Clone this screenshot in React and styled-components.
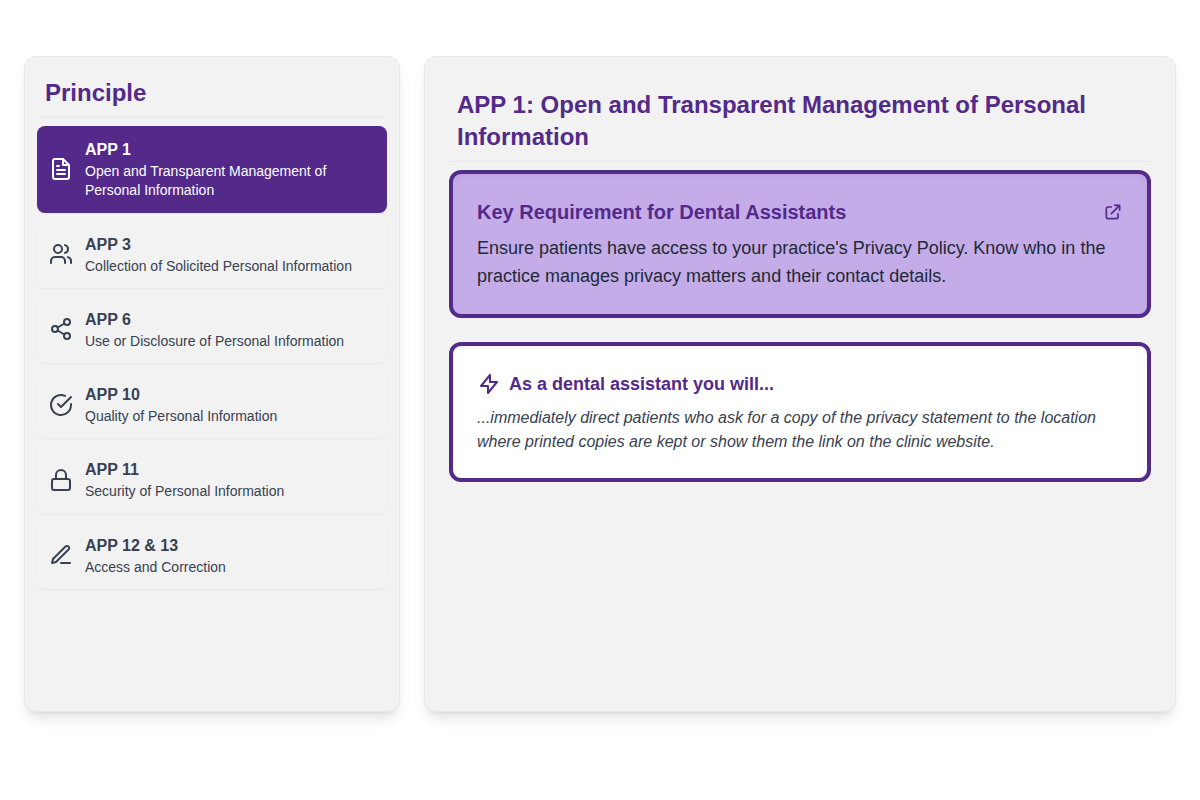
import React, { useState } from "react";
import styled, { createGlobalStyle } from "styled-components";

const purple = "#53298a";
const line = "#e5e7eb";

const GlobalStyle = createGlobalStyle`
  *, *::before, *::after { box-sizing: border-box; }
  body {
    margin: 0;
    background: #ffffff;
    color: #1f2937;
    font-family: "Liberation Sans", Arial, sans-serif;
    font-size: 16px;
    line-height: 24px;
  }
  h2, h3, h4, p, ul { margin: 0; padding: 0; }
`;

const Page = styled.main`
  display: grid;
  grid-template-columns: minmax(0, 1fr) minmax(0, 2fr);
  gap: 24px;
  min-height: 100vh;
  padding: 56px 24px 88px;
  @media (max-width: 700px) {
    grid-template-columns: minmax(0, 1fr);
  }
`;

const Panel = styled.section`
  padding: ${(p) => (p.$wide ? "24px" : "12px")};
  background: #f2f2f2;
  border: 1px solid ${line};
  border-radius: 12px;
  box-shadow: 0 10px 15px -3px rgba(0, 0, 0, 0.1), 0 4px 6px -4px rgba(0, 0, 0, 0.1);
`;

const PanelTitle = styled.h2`
  padding: 8px;
  margin-bottom: 8px;
  border-bottom: 1px solid ${line};
  color: ${purple};
  font-size: 24px;
  line-height: 32px;
  font-weight: 700;
`;

const PrincipleList = styled.ul`
  display: flex;
  flex-direction: column;
  gap: 8px;
  list-style: none;
`;

const PrincipleButton = styled.button`
  display: flex;
  align-items: center;
  gap: 12px;
  width: 100%;
  padding: 12px;
  border: 0;
  border-radius: 8px;
  background: ${(p) => (p.$active ? purple : "#f2f2f2")};
  color: ${(p) => (p.$active ? "#ffffff" : "#374151")};
  box-shadow: 0 1px 2px rgba(0, 0, 0, 0.05);
  font: inherit;
  text-align: left;
  cursor: pointer;
`;

const PrincipleText = styled.span`
  display: flex;
  flex-direction: column;
  min-width: 0;
`;

const Code = styled.span`
  font-weight: 700;
`;

const Summary = styled.span`
  font-size: 14px;
  line-height: 1.375;
`;

const Icon = styled.svg`
  flex: none;
  width: ${(p) => p.$size || 24}px;
  height: ${(p) => p.$size || 24}px;
  fill: none;
  stroke: currentColor;
  stroke-width: 2;
  stroke-linecap: round;
  stroke-linejoin: round;
`;

const Callout = styled.article`
  padding: 24px;
  border: 4px solid ${purple};
  border-radius: 12px;
  background: ${(p) => (p.$filled ? "#c4ace8" : "#ffffff")};
  box-shadow: inset 0 2px 4px rgba(0, 0, 0, 0.05);
  & + & { margin-top: 24px; }
`;

const CalloutHeader = styled.header`
  display: flex;
  align-items: center;
  justify-content: ${(p) => (p.$spread ? "space-between" : "flex-start")};
  gap: 8px;
  margin-bottom: 8px;
  color: ${purple};
`;

const CalloutTitle = styled.h3`
  font-size: ${(p) => (p.$small ? 18 : 20)}px;
  line-height: 28px;
  font-weight: 700;
`;

const PolicyLink = styled.a`
  display: flex;
  color: inherit;
`;

const Requirement = styled.p`
  font-size: 18px;
  line-height: 28px;
`;

const Action = styled.p`
  color: #374151;
  font-style: italic;
`;

const principles = [
  {
    code: "APP 1",
    name: "Open and Transparent Management of Personal Information",
    icon: (
      <>
        <path d="M14 2H6a2 2 0 0 0-2 2v16a2 2 0 0 0 2 2h12a2 2 0 0 0 2-2V8Z" />
        <path d="M14 2v6h6M10 9H8M16 13H8M16 17H8" />
      </>
    ),
  },
  {
    code: "APP 3",
    name: "Collection of Solicited Personal Information",
    icon: (
      <>
        <path d="M16 21v-2a4 4 0 0 0-4-4H6a4 4 0 0 0-4 4v2" />
        <circle cx="9" cy="7" r="4" />
        <path d="M22 21v-2a4 4 0 0 0-3-3.87M16 3.13a4 4 0 0 1 0 7.75" />
      </>
    ),
  },
  {
    code: "APP 6",
    name: "Use or Disclosure of Personal Information",
    icon: (
      <>
        <circle cx="18" cy="5" r="3" />
        <circle cx="6" cy="12" r="3" />
        <circle cx="18" cy="19" r="3" />
        <path d="M8.59 13.51l6.83 3.98M15.41 6.51l-6.82 3.98" />
      </>
    ),
  },
  {
    code: "APP 10",
    name: "Quality of Personal Information",
    icon: (
      <>
        <path d="M22 11.08V12a10 10 0 1 1-5.93-9.14" />
        <path d="m9 11 3 3L22 4" />
      </>
    ),
  },
  {
    code: "APP 11",
    name: "Security of Personal Information",
    icon: (
      <>
        <rect x="3" y="11" width="18" height="11" rx="2" />
        <path d="M7 11V7a5 5 0 0 1 10 0v4" />
      </>
    ),
  },
  {
    code: "APP 12 & 13",
    name: "Access and Correction",
    icon: (
      <>
        <path d="M12 20h9" />
        <path d="M16.5 3.5a2.121 2.121 0 0 1 3 3L7 19l-4 1 1-4Z" />
      </>
    ),
  },
];

export default function App() {
  const [selected, setSelected] = useState(0);
  return (
    <>
      <GlobalStyle />
      <Page>
        <Panel>
          <PanelTitle>Principle</PanelTitle>
          <PrincipleList>
            {principles.map((p, i) => (
              <li key={p.code}>
                <PrincipleButton
                  type="button"
                  $active={i === selected}
                  aria-pressed={i === selected}
                  onClick={() => setSelected(i)}
                >
                  <Icon viewBox="0 0 24 24" aria-hidden="true">{p.icon}</Icon>
                  <PrincipleText>
                    <Code>{p.code}</Code>
                    <Summary>{p.name}</Summary>
                  </PrincipleText>
                </PrincipleButton>
              </li>
            ))}
          </PrincipleList>
        </Panel>
        <Panel $wide>
          <PanelTitle>APP 1: Open and Transparent Management of Personal Information</PanelTitle>
          <Callout $filled>
            <CalloutHeader $spread>
              <CalloutTitle>Key Requirement for Dental Assistants</CalloutTitle>
              <PolicyLink href="#privacy-policy" aria-label="Open the privacy policy">
                <Icon $size={20} viewBox="0 0 24 24" aria-hidden="true">
                  <path d="M10 6H6a2 2 0 00-2 2v10a2 2 0 002 2h10a2 2 0 002-2v-4M14 4h6m0 0v6m0-6L10 14" />
                </Icon>
              </PolicyLink>
            </CalloutHeader>
            <Requirement>
              Ensure patients have access to your practice's Privacy Policy. Know who in the
              practice manages privacy matters and their contact details.
            </Requirement>
          </Callout>
          <Callout>
            <CalloutHeader>
              <Icon viewBox="0 0 24 24" aria-hidden="true">
                <path d="M13 10V3L4 14h7v7l9-11h-7z" />
              </Icon>
              <CalloutTitle $small>As a dental assistant you will...</CalloutTitle>
            </CalloutHeader>
            <Action>
              ...immediately direct patients who ask for a copy of the privacy statement to the
              location where printed copies are kept or show them the link on the clinic website.
            </Action>
          </Callout>
        </Panel>
      </Page>
    </>
  );
}
